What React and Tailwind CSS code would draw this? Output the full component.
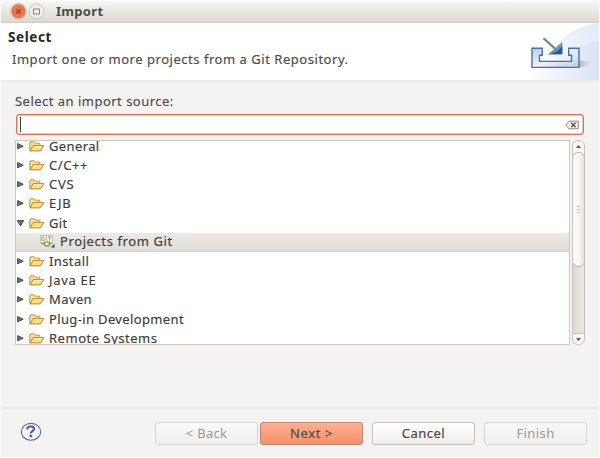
import React from "react";

function Folder() {
  return (
    <svg width="16" height="11" viewBox="0 0 16 11" className="ml-[5px] shrink-0">
      <path d="M.8 9.6V2.2L2 .8h3.2l1.3 1.4h4.3v2" fill="#f8dc9a" stroke="#c5963f" />
      <path d="M1 9.9 4.2 4.6h10.6L11.4 9.9Z" fill="#fbdc8c" stroke="#bd8528" strokeLinejoin="round" />
      <path d="M4.8 5.7h8.4" stroke="#fff1c4" />
    </svg>
  );
}

function Arrow({ open }) {
  return (
    <svg width="7" height="7" viewBox="0 0 7 7" className="shrink-0">
      <path d={open ? "M.3 .6h6.4L3.5 5.9Z" : "M.6 .6v5.2l5.6-2.6Z"} fill="#77736e" stroke="#3f3d3b" strokeWidth=".9" />
    </svg>
  );
}

function GitIcon() {
  return (
    <svg width="15" height="13" viewBox="0 0 15 13" className="shrink-0">
      <path d="M.5.5h12v7H.5z" fill="#f0f3e6" stroke="#bfc5ad" />
      <path d="M4.3 2H2v3.4h2.3V4M6.3 2v3.6M8 2h3.3M9.6 2v3.6" fill="none" stroke="#8fa084" strokeWidth=".9" />
      <path d="M1 8.5h11" stroke="#8c9a37" strokeWidth="1.2" />
      <ellipse cx="7" cy="8.9" rx="2.7" ry="2" fill="#f5f4ba" stroke="#8b942a" strokeWidth="1.2" />
      <path d="M14.5 8.8v3.7h-3.7Z" fill="#174c8b" />
    </svg>
  );
}

const items = [
  ["General", "tracking-[0.38px]"],
  ["C/C++", "tracking-[0.6px]"],
  ["CVS", "tracking-[0.8px]"],
  ["EJB", "tracking-[0.9px]"],
  ["Git", "tracking-[0.4px]"],
  ["Projects from Git", "tracking-[0.6px]"],
  ["Install", "tracking-[0.4px]"],
  ["Java EE", "tracking-[0.7px]"],
  ["Maven", "tracking-[0.4px]"],
  ["Plug-in Development", "tracking-[0.36px]"],
  ["Remote Systems", "tracking-[0.52px]"],
];

function Row({ label, spacing }) {
  const child = label === "Projects from Git";
  return (
    <div className={`flex h-[19.2px] shrink-0 items-center ${child ? "border-b border-[#d8d1c9] bg-linear-to-b from-[#edeae6] to-[#e0dcd7] pl-[24px]" : "pl-px"}`}>
      {child ? <GitIcon /> : <><Arrow open={label === "Git"} /><Folder /></>}
      <span className={`whitespace-nowrap text-[13px] leading-[19px] text-[#3c3b39] [-webkit-text-stroke:0.15px_#3c3b39] ${child ? "ml-[5px]" : "ml-[4px]"} ${spacing}`}>{label}</span>
    </div>
  );
}

function ImportArt() {
  return (
    <svg width="74" height="57" viewBox="0 0 74 57" className="shrink-0">
      <defs>
        <linearGradient id="sky" x1="0" y1="1" x2="1" y2="0">
          <stop offset="0" stopColor="#fff" />
          <stop offset="1" stopColor="#e1eaf9" />
        </linearGradient>
        <linearGradient id="fade" x1="0" x2="1">
          <stop offset="0" stopColor="#fff" />
          <stop offset="1" stopColor="#d9e3f7" />
        </linearGradient>
        <linearGradient id="tray" x1="0" y1="0" x2="1" y2="1">
          <stop offset="0" stopColor="#bccae0" />
          <stop offset=".5" stopColor="#eef3fb" />
          <stop offset="1" stopColor="#b9c9e3" />
        </linearGradient>
        <linearGradient id="shade" x1="0" x2="1">
          <stop offset="0" stopColor="#b5adbd" />
          <stop offset="1" stopColor="#dfe5f3" stopOpacity="0" />
        </linearGradient>
        <radialGradient id="glow">
          <stop offset="0" stopColor="#fdfcc8" />
          <stop offset="1" stopColor="#fdfdde" stopOpacity="0" />
        </radialGradient>
      </defs>
      <path d="M26 28Q44 4 74 0v57H0Q8 40 26 28Z" fill="url(#sky)" />
      <path d="M46 29Q58 20 74 18v39H2V47Z" fill="url(#fade)" />
      <path d="M54 44.5V37.5L71 38.5Q64 43 54 44.5Z" fill="url(#shade)" />
      <circle cx="28" cy="25" r="10" fill="url(#glow)" />
      <path d="M7 25.2h10.3v7h-2.8v6.2h32v-6.2h-2.8v-7H54v19.2H7Z" fill="url(#tray)" stroke="#4a71a5" strokeWidth="1.4" />
      <path d="m18.5 15.3 12 10.7" stroke="#5f84b1" strokeWidth="2.2" />
      <path d="M37 19.5v11.8H23.7Z" fill="#6d90ba" stroke="#7695bb" strokeWidth=".7" />
      <path d="m25.5 31 7-2.8 4.8-5V31Z" fill="#2f578b" />
    </svg>
  );
}

function ScrollBar() {
  return (
    <div className="flex h-[205px] w-[13px] flex-col overflow-hidden rounded-[6px] border border-[#c9c2b9] bg-linear-to-r from-[#ddd8d3] to-[#ebe8e4]">
      <div className="flex h-[14px] shrink-0 items-center justify-center bg-[#f8f7f5] pb-[3px]">
        <svg width="5" height="3" viewBox="0 0 5 3"><path d="M0 3 2.5 0 5 3Z" fill="#5a5855" /></svg>
      </div>
      <div className="-mx-px -mt-[3px] flex h-[115px] shrink-0 flex-col items-center justify-center gap-[2px] rounded-[6px] border border-[#bfb7ad] bg-linear-to-r from-[#faf9f8] via-[#f9f8f7] to-[#e6e2de]">
        <i className="h-px w-[3px] bg-[#cdc9c4]" />
        <i className="h-px w-[3px] bg-[#cdc9c4]" />
        <i className="h-px w-[3px] bg-[#cdc9c4]" />
      </div>
      <div className="mt-auto flex h-[11px] shrink-0 items-center justify-center rounded-b-[6px] border-t border-[#c9c2b9] bg-[#faf9f8]">
        <svg width="5" height="3" viewBox="0 0 5 3"><path d="M0 0 2.5 3 5 0Z" fill="#5a5855" /></svg>
      </div>
    </div>
  );
}

function Button({ children, look }) {
  return (
    <button className={`flex h-[23px] w-[103px] items-center justify-center rounded-[3px] border text-[13px] ${look}`}>
      {children}
    </button>
  );
}

export default function App() {
  return (
    <div className="h-[458px] w-[600px] overflow-hidden bg-white pl-px pr-px pt-px font-['Noto_Sans',sans-serif] text-[#4c4b49]">
      <div className="flex h-[456px] flex-col bg-[#f4f3f1]">
        <header className="flex h-[22px] shrink-0 items-center rounded-t-[3px] border-b border-[#d5cbc1] bg-linear-to-b from-[#f7f6f4] to-[#ddd7d0] pl-[9px]">
          <svg width="36" height="17" viewBox="0 0 36 17">
            <circle cx="8.5" cy="8.3" r="7.5" fill="#ef744b" stroke="#c7beb5" strokeWidth="1.2" />
            <path d="m6.3 6.1 4.4 4.4m0-4.4-4.4 4.4" stroke="#7b4735" strokeWidth="1.3" />
            <circle cx="26.5" cy="8.3" r="7.5" fill="#efedea" stroke="#cbc6c0" />
            <path d="M23.5 6h6v5h-6z" fill="none" stroke="#85807a" />
          </svg>
          <h1 className="-mt-[2px] ml-[10px] text-[13px] font-bold leading-[20px] tracking-[0.3px] text-[#4c4a47]">Import</h1>
        </header>
        <section className="flex h-[57px] shrink-0 justify-between bg-white">
          <div className="pl-[7px] pt-[5px]">
            <h2 className="text-[13.5px] font-bold leading-[18px] tracking-[0.6px] text-[#292826]">Select</h2>
            <p className="ml-[4px] mt-[4px] whitespace-nowrap text-[13px] leading-[19px] tracking-[0.53px] [-webkit-text-stroke:0.15px_#4c4b49]">Import one or more projects from a Git Repository.</p>
          </div>
          <ImportArt />
        </section>
        <div className="h-[2px] shrink-0 bg-[#eeece8]" />
        <main className="flex h-[325px] shrink-0 flex-col px-[14px] pt-[10px]">
          <label className="h-[22px] whitespace-nowrap text-[13px] leading-[19px] tracking-[0.48px] [-webkit-text-stroke:0.15px_#4c4b49]">Select an import source:</label>
          <div className="ml-px flex h-[21px] w-[568px] shrink-0 items-center justify-between rounded-[3px] border-[1.5px] border-[#df7350] bg-white pl-[3px] pr-[4px] shadow-[inset_0_0_0_.5px_#e58d70]">
            <span className="h-[15px] w-px bg-[#3c3b39]" />
            <svg width="14" height="10" viewBox="0 0 14 10">
              <path d="M.8 5 4 1.2h9.2v7.6H4Z" fill="#f7f7f6" stroke="#888682" />
              <path d="m6.2 2.8 4.4 4.4m0-4.4-4.4 4.4" stroke="#5c5a58" strokeWidth="1.6" />
            </svg>
          </div>
          <div className="mt-[5px] flex w-[570px] justify-between">
            <div className="flex h-[205px] w-[555px] flex-col overflow-hidden border border-[#cfc6be] bg-white">
              <div className="-mt-[4.2px] flex shrink-0 flex-col">
                {items.map(([label, spacing]) => <Row key={label} label={label} spacing={spacing} />)}
              </div>
            </div>
            <ScrollBar />
          </div>
        </main>
        <footer className="flex min-h-0 flex-1 items-start border-t-2 border-[#e9e7e4] pl-[19px] pt-[13px]">
          <svg width="22" height="20" viewBox="0 0 22 20">
            <ellipse cx="11" cy="9.8" rx="9.7" ry="8.4" fill="#f3f4f8" stroke="#596b92" strokeWidth="1.1" />
            <path d="M7.4 7.5V5.7C9.5 4 14 4 14 6.8c0 2.4-3.1 2.2-3.1 4.8" fill="none" stroke="#4c6090" strokeWidth="2.1" />
            <path d="M9.6 13h2.6v2.2H9.6z" fill="#4c6090" />
          </svg>
          <div className="ml-[113px] flex">
            <Button look="border-[#d9d5d0] bg-linear-to-b from-[#fbfaf9] to-[#f1efed] text-[#9b9996] tracking-[0.3px]">&lt; Back</Button>
            <span className="w-[2px]" />
            <Button look="border-[#c08670] bg-linear-to-b from-[#ffaf91] to-[#f5906a] text-[#504b47] tracking-[0.6px] [-webkit-text-stroke:0.2px_#504b47]">Next &gt;</Button>
            <span className="w-[9px]" />
            <Button look="border-[#c7c0b8] bg-linear-to-b from-white to-[#f1efed] text-[#4b4a47] tracking-[0.5px] [-webkit-text-stroke:0.2px_#4b4a47]">Cancel</Button>
            <span className="w-[9px]" />
            <Button look="border-[#d9d5d0] bg-linear-to-b from-[#f8f7f6] to-[#f2f0ee] text-[#9b9996] tracking-[0.4px]">Finish</Button>
          </div>
        </footer>
      </div>
    </div>
  );
}
